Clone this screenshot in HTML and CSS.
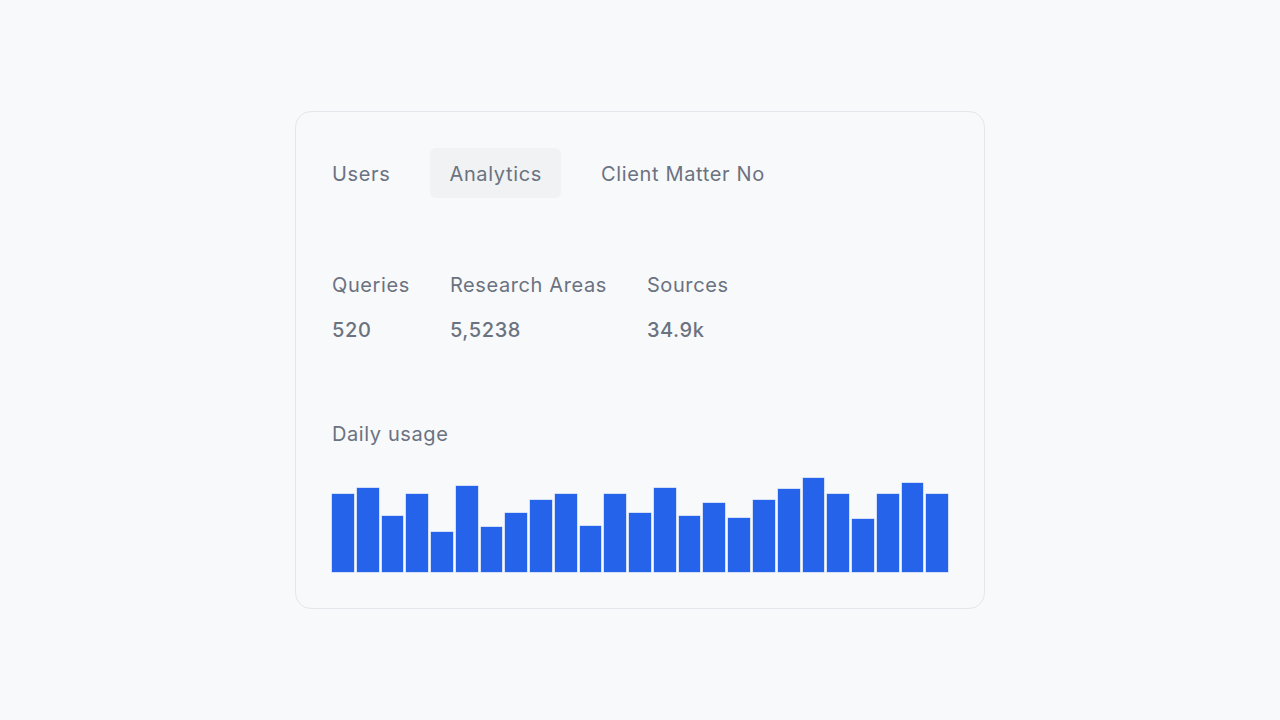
FILE: index.html
```html
<!DOCTYPE html>
<html lang="en">
<head>
<meta charset="utf-8">
<title>Analytics</title>
<link rel="stylesheet" href="styles.css">
</head>
<body>
<main class="page">
  <section class="card">
    <nav class="tabs">
      <span class="tab tab-first">Users</span>
      <span class="tab tab-active">Analytics</span>
      <span class="tab">Client Matter No</span>
    </nav>
    <div class="stats">
      <div class="stat">
        <div class="stat-label">Queries</div>
        <div class="stat-value">520</div>
      </div>
      <div class="stat">
        <div class="stat-label">Research Areas</div>
        <div class="stat-value">5,5238</div>
      </div>
      <div class="stat">
        <div class="stat-label">Sources</div>
        <div class="stat-value">34.9k</div>
      </div>
    </div>
    <div class="usage">
      <div class="usage-label">Daily usage</div>
      <div class="chart">
        <div class="bar" style="height:78px"></div>
        <div class="bar" style="height:84px"></div>
        <div class="bar" style="height:56px"></div>
        <div class="bar" style="height:78px"></div>
        <div class="bar" style="height:40px"></div>
        <div class="bar" style="height:86px"></div>
        <div class="bar" style="height:45px"></div>
        <div class="bar" style="height:59px"></div>
        <div class="bar" style="height:72px"></div>
        <div class="bar" style="height:78px"></div>
        <div class="bar" style="height:46px"></div>
        <div class="bar" style="height:78px"></div>
        <div class="bar" style="height:59px"></div>
        <div class="bar" style="height:84px"></div>
        <div class="bar" style="height:56px"></div>
        <div class="bar" style="height:69px"></div>
        <div class="bar" style="height:54px"></div>
        <div class="bar" style="height:72px"></div>
        <div class="bar" style="height:83px"></div>
        <div class="bar" style="height:94px"></div>
        <div class="bar" style="height:78px"></div>
        <div class="bar" style="height:53px"></div>
        <div class="bar" style="height:78px"></div>
        <div class="bar" style="height:89px"></div>
        <div class="bar" style="height:78px"></div>
      </div>
    </div>
  </section>
</main>
</body>
</html>
```
FILE: styles.css
```css
* { box-sizing: border-box; }
html, body {
  margin: 0;
  padding: 0;
  background: #f8f9fb;
  font-family: Inter, "Liberation Sans", sans-serif;
}
.page {
  width: 1280px;
  height: 720px;
  display: flex;
  justify-content: center;
  padding-top: 111px;
}
.card {
  width: 690px;
  height: 498px;
  border: 1px solid #e3e6ea;
  border-radius: 16px;
  background: #f8f9fb;
  padding: 36px;
  display: flex;
  flex-direction: column;
}
.tabs {
  display: flex;
  height: 50px;
  gap: 21px;
  margin-left: -19px;
}
.tab {
  display: flex;
  align-items: center;
  padding: 2px 19px 0;
  height: 50px;
  font-size: 20px;
  letter-spacing: 0.65px;
  color: #6b7280;
  border-radius: 6px;
}
.tab-active {
  background: #f1f2f4;
}
.stats {
  display: flex;
  gap: 40px;
  margin-top: 75px;
}
.stat {
  display: flex;
  flex-direction: column;
  gap: 21px;
}
.stat-label {
  font-size: 20px;
  line-height: 24px;
  letter-spacing: 0.6px;
  color: #6b7280;
}
.stat-value {
  font-size: 20px;
  line-height: 24px;
  letter-spacing: 0.6px;
  font-weight: 500;
  color: #6b7280;
}
.usage {
  margin-top: 80px;
  display: flex;
  flex-direction: column;
  flex: 1;
}
.usage-label {
  font-size: 20px;
  line-height: 24px;
  letter-spacing: 0.6px;
  color: #6b7280;
}
.chart {
  flex: 1;
  display: flex;
  align-items: flex-end;
  gap: 3px;
}
.bar {
  flex: 1;
  background: #2563eb;
  box-shadow: 0 0 0 0.5px rgba(37, 99, 235, 0.35);
}
```
